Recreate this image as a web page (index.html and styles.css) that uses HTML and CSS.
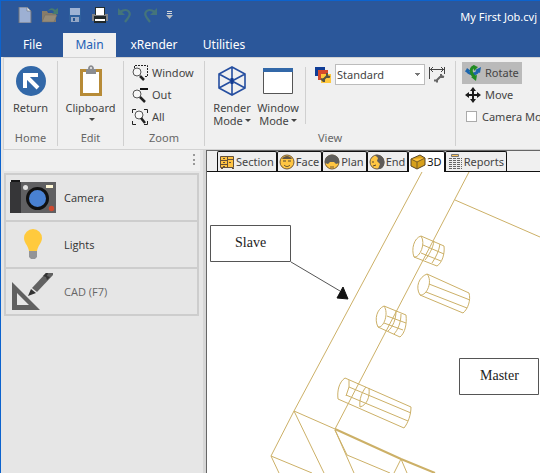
FILE: index.html
```html
<!DOCTYPE html>
<html lang="en">
<head>
<meta charset="utf-8">
<title>My First Job.cvj</title>
<link rel="stylesheet" href="styles.css">
</head>
<body>
<div class="window">
  <header class="titlebar">
    <div class="title-row">
      <div class="quick">
        <button aria-label="New"><svg width="16" height="16" viewBox="0 0 16 16"><path d="M2 0h8l4 4v12H2z" fill="#9db0d3" stroke="#71757c"/><path d="M10 0v4h4z" fill="#e0e5ed" stroke="#71757c" stroke-width=".6"/></svg></button>
        <button aria-label="Open"><svg width="18" height="16" viewBox="0 0 18 16"><path d="M1 15V4h5l1 2h8v9z" fill="#877c69"/><path d="M1 15l3-7h12l-3 7z" fill="#958b78" stroke="#6f6b63" stroke-width=".5"/><path d="M7 4c2-4 6-3 7-1l3-2v6h-6l2-2c-1-2-3-3-6-1z" fill="#477b70"/></svg></button>
        <button aria-label="Save"><svg width="16" height="16" viewBox="0 0 16 16"><path d="M2 1h12v14H2z" fill="#2f609d"/><path d="M3 1h10v7H3z" fill="#9eb2d4"/><path d="M4 10h8v5H4z" fill="#94a6c5"/><path d="M6 11h2v3H6z" fill="#285590"/></svg></button>
        <button aria-label="Print"><svg width="16" height="16" viewBox="0 0 16 16"><path d="M0 7h16v7H0z" fill="#808286"/><path d="M3 0h10v8H3z" fill="#242e2e"/><path d="M4 1h8v7H4z" fill="#fff"/><path d="M2 9h12v7H2z" fill="#20282a"/><path d="M3 12h10v2H3z" fill="#fff"/></svg></button>
        <button aria-label="Undo"><svg width="16" height="16" viewBox="0 0 16 16"><path d="M3 5c8-5 12 1 8 6l-3 4" fill="none" stroke="#44747b" stroke-width="2.2"/><path d="M1 1v7h7z" fill="#44747b"/></svg></button>
        <button aria-label="Redo"><svg width="16" height="16" viewBox="0 0 16 16"><path d="M13 5c-8-5-12 1-8 6l3 4" fill="none" stroke="#44747b" stroke-width="2.2"/><path d="M15 1v7H8z" fill="#44747b"/></svg></button>
        <button class="more" aria-label="Customize toolbar"><svg width="7" height="8" viewBox="0 0 7 8"><path d="M1 .5h5M1 2.500h5" stroke="#d3d7dc"/><path d="M0 4h7L3.500 8z" fill="#b9bdc1"/></svg></button>
      </div>
      <span class="doc-title">My First Job.cvj</span>
    </div>
    <nav class="menu">
      <a class="menu-file" href="#file">File</a>
      <a class="active" href="#main">Main</a>
      <a class="menu-render" href="#xrender">xRender</a>
      <a class="menu-utilities" href="#utilities">Utilities</a>
    </nav>
  </header>

  <div class="ribbon">
    <section class="group home">
      <div class="tools"><button class="big"><svg width="32" height="32" viewBox="0 0 32 32"><circle cx="16" cy="16" r="15" fill="#3268a8"/><path d="M10 23V10h13M10 10l13 13" fill="none" stroke="#fff" stroke-width="4"/></svg><span>Return</span></button></div>
      <h2>Home</h2>
    </section>
    <section class="group edit">
      <div class="tools"><button class="big"><svg width="32" height="32" viewBox="0 0 32 32"><path d="M5 4h22v27H5z" fill="#b78b37"/><path d="M8 7h16v21H8z" fill="#fff"/><path d="M11 9V4h2c0-5 6-5 6 0h2v5z" fill="#8b8d91"/><circle cx="16" cy="3" r="1" fill="#f0f0f0"/></svg><span>Clipboard</span><i class="caret"></i></button></div>
      <h2>Edit</h2>
    </section>
    <section class="group zoom">
      <div class="tools stack">
        <button class="small"><svg width="16" height="16" viewBox="0 0 16 16"><path d="M2.500 3V.5h13v11H12" fill="none" stroke="#222" stroke-dasharray="2 1"/><circle cx="5" cy="7" r="4" fill="#f7f7f7" stroke="#555"/><path d="M8 11l4 4" stroke="#222" stroke-width="2.500"/></svg>Window</button>
        <button class="small"><svg width="16" height="16" viewBox="0 0 16 16"><path d="M8 2h8" stroke="#111" stroke-width="2"/><circle cx="5" cy="7" r="4" fill="#f7f7f7" stroke="#555"/><path d="M8 10l5 5" stroke="#222" stroke-width="2.500"/></svg>Out</button>
        <button class="small"><svg width="16" height="16" viewBox="0 0 16 16"><path d="M4 .5H.5V4M12 .5h3.500V4M.5 12v3.500H4M15.500 12v3.500H12" fill="none" stroke="#222"/><circle cx="7" cy="6" r="4" fill="#f7f7f7" stroke="#555"/><path d="M9 9l4 5" stroke="#222" stroke-width="2.500"/></svg>All</button>
      </div>
      <h2>Zoom</h2>
    </section>
    <section class="group view">
      <div class="tools">
        <button class="big mode"><svg width="32" height="32" viewBox="0 0 32 32"><path d="M16 2l13 7v14l-13 7L3 23V9zM3 9l13 7 13-7M16 2v28M3 23l13-7 13 7" fill="none" stroke="#254ea0" stroke-width="1.600"/><path d="M16 13v6" stroke="#123b90" stroke-width="3"/></svg><span>Render</span><span>Mode<i class="caret"></i></span></button>
        <button class="big mode"><svg width="32" height="32" viewBox="0 0 32 32"><path d="M1.500 3.500h29v25h-29z" fill="#fff" stroke="#555"/><path d="M1 3h30v4H1z" fill="#3268a8"/></svg><span>Window</span><span>Mode<i class="caret"></i></span></button>
        <div class="style-tools">
          <button aria-label="Edit styles"><svg width="16" height="16" viewBox="0 0 16 16"><path d="M0 0h10v9H0z" fill="#113d96"/><path d="M3 3h10v10H3z" fill="#d64a2c"/><path d="M6 7h10v9H6z" fill="#ffc83d"/><path d="M7 14l6-6m-1-2v3l3 1m-9 2 3 1v2" fill="none" stroke="#575445" stroke-width="2"/></svg></button>
          <select aria-label="Style"><option>Standard</option></select>
          <button aria-label="Dimension settings"><svg width="16" height="17" viewBox="0 0 16 17"><path d="M.5 0v12M15.500 0v7M1 2.500h14M4 0L1.500 2.500 4 5M12 0l2.500 2.500L12 5" fill="none" stroke="#444"/><path d="M7 14l5-5m0-2v2l3 1M5 13.500h3v2" fill="none" stroke="#666" stroke-width="2"/></svg></button>
        </div>
      </div>
      <h2>View</h2>
    </section>
    <section class="group move">
      <div class="tools stack">
        <button class="small pressed"><svg width="16" height="16" viewBox="0 0 16 16"><path d="M2 5c1 4 8 6 11 1" fill="none" stroke="#1c65ad" stroke-width="3"/><path d="M0 7l2-4 4 3zM10 5l6-3-1 6z" fill="#1c65ad"/><path d="M10 2C5 1 5 9 10 12" fill="none" stroke="#218b22" stroke-width="3"/><path d="M8 0l5 2-4 4zM6 12l6-2-1 6z" fill="#218b22"/></svg>Rotate</button>
        <button class="small"><svg width="16" height="16" viewBox="0 0 16 16"><path d="M8 2v12M2 8h12" stroke="#1c1c1c" stroke-width="2"/><path d="M8 0l3 4H5zM8 16l3-4H5zM0 8l4-3v6zM16 8l-4-3v6z" fill="#1c1c1c"/></svg>Move</button>
        <label class="check"><input type="checkbox">Camera Mo</label>
      </div>
    </section>
  </div>

  <div class="workspace">
    <aside class="sidebar">
      <div class="side-head"><button aria-label="Panel options"><i></i><i></i><i></i></button></div>
      <div class="side-list">
        <button><svg width="48" height="40" viewBox="0 0 48 40"><path d="M1 4h46v31H1z" fill="#606062"/><path d="M1 4h11v31H1z" fill="#363638"/><path d="M2 4V2h9v2z" fill="#161617"/><circle cx="28.500" cy="20.500" r="10" fill="#4981d2" stroke="#111" stroke-width="3"/><circle cx="16.500" cy="9.500" r="2.500" fill="#e2e2e2"/><path d="M37 7h7v3h-7z" fill="#fff8d6"/><circle cx="42.500" cy="30.500" r="2.700" fill="#cf482e"/></svg>Camera</button>
        <button><svg width="48" height="40" viewBox="0 0 48 40"><path d="M20 26c-1-6-5-8-5-13a9 9 0 0 1 18 0c0 5-4 7-5 13z" fill="#ffca3d"/><path d="M20 26h8v6l-2 2h-4l-2-2z" fill="#939497"/></svg>Lights</button>
        <button class="dim"><svg width="48" height="40" viewBox="0 0 48 40"><path d="M3 10v28h28zm5 11 12 12H8z" fill="#606060" fill-rule="evenodd"/><path d="M23 16L37 1h7v2L28 20z" fill="#626262"/><path d="M19 24l3-7 5 4zM34 4l3-3h2l-1 3 3 1-3 3-1-3z" fill="#333"/></svg>CAD (F7)</button>
      </div>
    </aside>
    <main class="document">
      <nav class="views">
        <a href="#section"><svg width="16" height="16" viewBox="0 0 16 16"><path d="M1.500 2.500h13v11h-13zM2 6.500h6M2 10.500h6M8.500 3v10M9 5.500h6" fill="#ffc342" stroke="#65513a"/><path d="M4 4.500h2M4 8.500h2M4 12.500h2M10 8.500h2M2 14.500h2M13 14.500h2" stroke="#65513a"/></svg>Section</a>
        <a href="#face"><svg width="16" height="16" viewBox="0 0 16 16"><circle cx="8" cy="8" r="7" fill="#ffc642" stroke="#765b35"/><path d="M3 5c2-4 8-4 10 0z" fill="#625544"/><path d="M4 7h3M9 7h3M5 11c2 2 4 2 6 0" fill="none" stroke="#59492f"/></svg>Face</a>
        <a href="#plan"><svg width="16" height="16" viewBox="0 0 16 16"><circle cx="8" cy="8" r="7" fill="#ffc642" stroke="#765b35"/><path d="M1 9C-1-2 17-2 15 9l-3 1-2-2H6l-2 2z" fill="#5f5e5b"/><path d="M6 13h4" stroke="#765b35"/></svg>Plan</a>
        <a href="#end"><svg width="16" height="16" viewBox="0 0 16 16"><circle cx="8" cy="8" r="7" fill="#ffc642" stroke="#6c5b44"/><path d="M6 1c12-2 12 15 3 14l2-5-3-3 1-3z" fill="#5e5b59"/><path d="M4 7v2M4 12l3-1" stroke="#56452d"/></svg>End</a>
        <a class="current" href="#3d"><svg width="16" height="16" viewBox="0 0 16 16"><path d="M1 5l9-4 5 3v7l-8 4-6-3z" fill="#d7a01b" stroke="#584529"/><path d="M1 5l6 3 8-4M7 8v7" fill="#ffc33b" stroke="#795d24"/></svg>3D</a>
        <a href="#reports"><svg width="16" height="16" viewBox="0 0 16 16"><path d="M4.500.5h7v2h-7z" fill="#ffc457" stroke="#777"/><path d="M2 4.500h13M2 6.500h13M2 8.500h13M2 10.500h13M2 12.500h13M2 14.500h13" stroke="#666" stroke-dasharray="3 1"/></svg>Reports</a>
      </nav>
      <svg class="drawing" viewBox="207 172 333 301" preserveAspectRatio="xMinYMin slice" role="img" aria-label="Slave and master panels">
        <g class="wire">
          <path d="M422 172L294 411 271 456M469 172L335 429M455 200L540 237M294 411l41 18M271 456l41 17M271 456l8 17M294 411l30 62M347 455l43 18M335 430l12 25M335 430l19 43M401 459l-7 14M401 459l6 14"/>
          <path class="heavy" d="M335 429l66 30 34 14"/>
          <path d="M421 236c-7 2-10 13-7 21 6 1 12-14 7-21l23 10c1 8-2 17-7 20l-23-9M423 245l21 9M421 253l20 8M434 241c-1 7-5 14-9 19M440 244c-1 7-4 13-8 19"/>
          <path d="M427 274c-8 3-12 13-7 21 7 1 13-14 7-21l42 19c2 7-1 16-6 20l-43-18M429 284l41 16M426 292l41 16"/>
          <path d="M384 306c-7 3-10 13-6 21 6 1 11-14 6-21l22 9c1 9-1 18-6 22l-22-10M387 316l19 7M384 323l19 7M396 311c0 8-3 16-8 20M401 314c0 8-3 16-7 20"/>
          <path d="M345 378c-6 4-8 13-7 21l66 29c4-5 7-13 7-21zM349 380v7l-3 9M349 387l62 26M346 395l62 26M369 388c1 9-2 17-9 19M360 407c-1-8 2-15 6-20"/>
        </g>
        <g class="callout">
          <path d="M210.500 225.500h80v36h-80zM459.500 358.500h79v36h-79zM291 262l49 29"/>
          <path class="arrow" d="M343 287l5 12-11-1z"/>
          <text x="235" y="247">Slave</text>
          <text x="480" y="380">Master</text>
        </g>
      </svg>
    </main>
  </div>
</div>
</body>
</html>
```
FILE: styles.css
```css
* { box-sizing: border-box; }
body { margin: 0; font: 12px/16px "Noto Sans", sans-serif; color: #444; }
button { padding: 0; border: 0; background: none; color: inherit; font: inherit; }
a { color: inherit; text-decoration: none; }
svg { display: block; flex: none; }
.window { display: flex; flex-direction: column; height: 100vh; overflow: hidden; background: #e6e6e6; border: solid #0c63ce; border-width: 1px 0 0 1px; }
.titlebar { background: #2b579a; color: #fff; }
.title-row { display: flex; align-items: center; justify-content: space-between; height: 32px; padding: 0 3px 4px 15px; }
.quick { display: flex; align-items: center; gap: 8px; }
.quick button { display: grid; place-items: center; width: 17px; height: 16px; }
.quick .more { width: 7px; }
.doc-title { padding-top: 4px; font-size: 11px; white-space: nowrap; }
.menu { display: flex; height: 24px; padding-left: 1px; }
.menu a { display: grid; place-items: center; height: 24px; }
.menu-file { width: 61px; }
.menu .active { width: 53px; background: #f0f0f0; color: #2260b5; }
.menu-render { width: 76px; }
.menu-utilities { width: 64px; }

.ribbon { display: flex; flex: none; height: 93px; margin-left: 2px; padding: 3px 0; overflow: hidden; border: solid #d2d2d2; border-width: 1px 0 1px 1px; background: #f0f0f0; font-size: 11px; }
.group { display: flex; flex-direction: column; flex: none; justify-content: space-between; border-right: 1px solid #d0d0d0; }
.group h2 { margin: 0; color: #666; font: inherit; text-align: center; }
.home { width: 54px; }
.edit { width: 66px; }
.zoom { width: 81px; }
.view { width: 251px; }
.move { border: 0; }
.tools { display: flex; }
.big { display: flex; flex: 1; flex-direction: column; align-items: center; line-height: 13px; padding-top: 4px; }
.big svg { margin-bottom: 4px; }
.caret { display: inline-block; border: solid transparent; border-width: 3px 3px 0; border-top-color: #444; margin: 4px 0 0 2px; vertical-align: 3px; }
.stack { flex-direction: column; padding: 1px 8px; }
.small { display: flex; align-items: center; gap: 4px; height: 22px; white-space: nowrap; }
.view .tools { padding-left: 4px; }
.view .mode { flex: none; width: 46px; }
.style-tools { display: flex; align-items: flex-start; gap: 4px; height: 57px; margin: 6px 0 0 4px; padding-left: 9px; border-left: 1px solid #d0d0d0; }
.style-tools select { width: 90px; height: 21px; margin-top: -3px; padding: 0 12px 0 1px; appearance: none; border: 1px solid #bcbcbc; border-radius: 0; background: linear-gradient(45deg, transparent 50%, #777 50%) right 6px center / 3px 3px no-repeat, linear-gradient(315deg, transparent 50%, #777 50%) right 3px center / 3px 3px no-repeat, #fff; color: #444; font: inherit; }
.move .stack { padding-left: 6px; }
.move .small { width: 60px; padding: 0 3px; }
.pressed { background: #bababa; }
.check { display: flex; align-items: center; gap: 5px; height: 21px; padding-left: 4px; white-space: nowrap; }
.check input { width: 11px; height: 11px; margin: 0; appearance: none; border: 1px solid #aaa; background: #fff; }

.workspace { display: flex; flex: 1; min-height: 0; }
.sidebar { display: flex; flex: none; flex-direction: column; gap: 2px; width: 205px; padding: 0 3px; border-right: 3px solid #d6d6d6; }
.side-head { display: flex; justify-content: flex-end; height: 21px; padding: 4px 5px; background: #f0f0f0; }
.side-head button { display: grid; gap: 2px; height: 12px; }
.side-head i { width: 2px; height: 2px; background: #999; }
.side-list { display: flex; flex-direction: column; border-bottom: 2px solid #cdcdcd; margin-right: 1px; }
.side-list button { display: flex; align-items: center; gap: 7px; height: 47px; padding-left: 3px; border: solid #cdcdcd; border-width: 2px 2px 0; background: #e6e6e6; font: 11px/16px "Open Sans", sans-serif; color: #333; }
.side-list .dim { color: #666; }
.document { display: flex; flex: 1; flex-direction: column; min-width: 0; background: #fff; border: solid #666; border-width: 1px 0 0 1px; }
.views { display: flex; flex: none; height: 21px; padding-left: 10px; background: linear-gradient(#111, #111) bottom / 100% 1px no-repeat #f0f0f0; font-size: 11px; }
.views a { display: flex; align-items: center; gap: 1px; height: 20px; padding: 0 2px 0 1px; border: solid #111; border-width: 1px 1px 0; border-radius: 2px 2px 0 0; background: #eee; }
.views .current { height: 21px; background: #fff; color: #111; }
.drawing { flex: 1; width: 100%; min-height: 0; }
.wire { fill: none; stroke: #ccb067; stroke-width: 1; }
.heavy { stroke-width: 2; }
.callout path { fill: none; stroke: #555; }
.callout .arrow { fill: #111; stroke: #111; }
.callout text { font: 14px "Liberation Serif", serif; fill: #222; }
```
